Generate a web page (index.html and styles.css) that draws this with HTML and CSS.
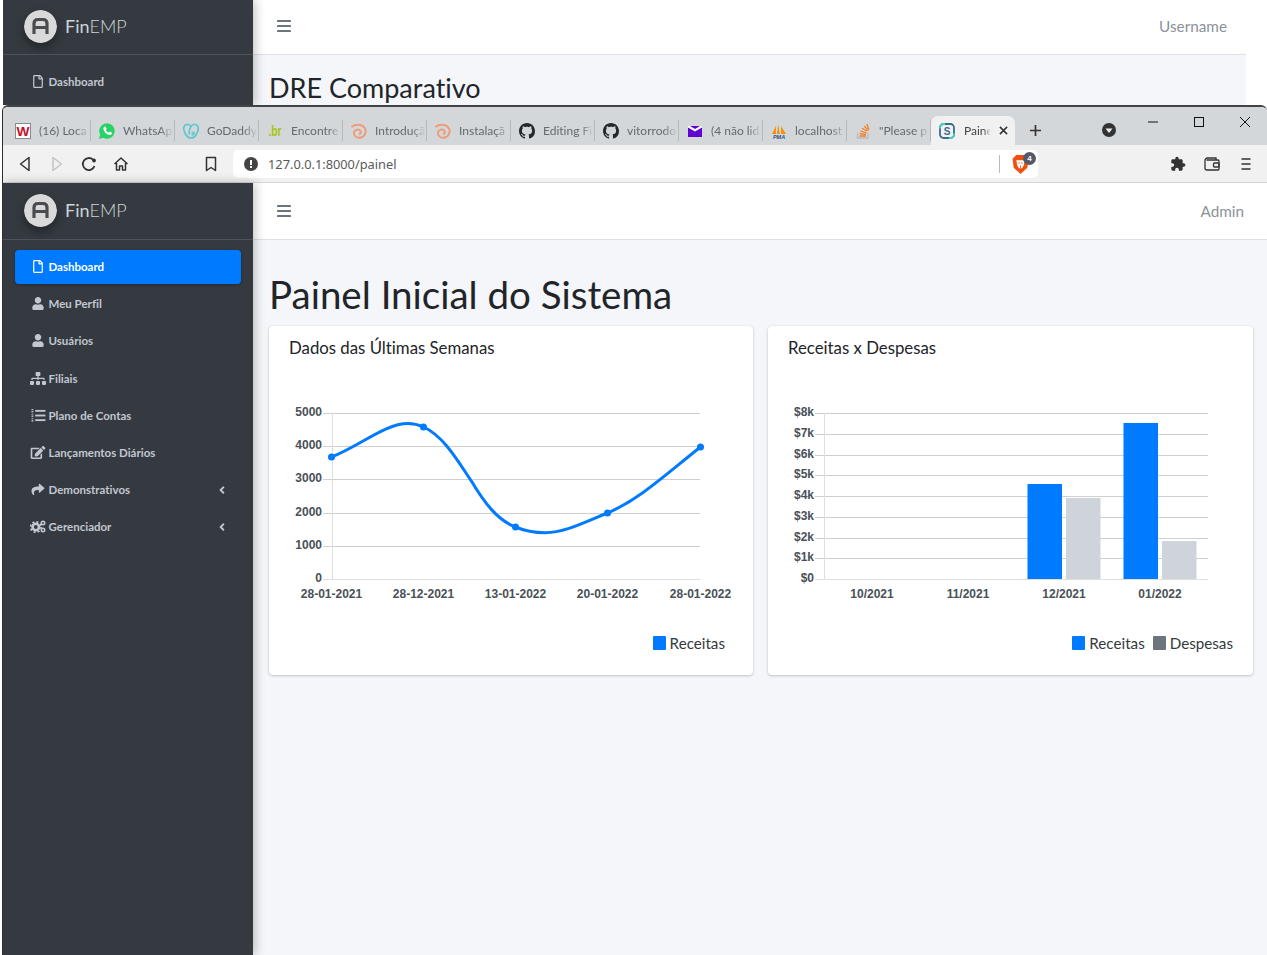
FILE: index.html
```html
<!DOCTYPE html>
<html lang="pt-BR">
<head>
    <meta charset="UTF-8">
    <title>Painel Inicial do Sistema - FinEMP</title>
    <link rel="stylesheet" href="styles.css">
</head>
<body>
    <!-- shared icons -->
    <svg class="defs" aria-hidden="true">
        <symbol id="i-file" viewBox="0 0 384 512"><path d="M369.9 97.9L286 14C277 5 264.8-.1 252.1-.1H48C21.5 0 0 21.5 0 48v416c0 26.5 21.5 48 48 48h288c26.5 0 48-21.5 48-48V131.9c0-12.7-5.1-25-14.1-34zM332.1 128H256V51.9l76.1 76.1zM48 464V48h160v104c0 13.3 10.7 24 24 24h104v288H48z"/></symbol>
        <symbol id="i-user" viewBox="0 0 448 512"><path d="M224 256c70.7 0 128-57.3 128-128S294.7 0 224 0 96 57.3 96 128s57.3 128 128 128zm89.6 32h-16.7c-22.2 10.2-46.9 16-72.9 16s-50.6-5.8-72.9-16h-16.7C60.2 288 0 348.2 0 422.4V464c0 26.5 21.5 48 48 48h352c26.5 0 48-21.5 48-48v-41.6c0-74.2-60.2-134.4-134.4-134.4z"/></symbol>
        <symbol id="i-sitemap" viewBox="0 0 640 512"><path d="M128 352H32c-17.67 0-32 14.33-32 32v96c0 17.67 14.33 32 32 32h96c17.67 0 32-14.33 32-32v-96c0-17.67-14.33-32-32-32zm-24-80h192v48h48v-48h192v48h48v-57.59c0-21.17-17.23-38.41-38.41-38.41H344v-64h40c17.67 0 32-14.33 32-32V32c0-17.67-14.33-32-32-32H256c-17.67 0-32 14.33-32 32v96c0 17.67 14.33 32 32 32h40v64H94.41C73.23 224 56 241.23 56 262.41V320h48v-48zm264 80h-96c-17.67 0-32 14.33-32 32v96c0 17.67 14.33 32 32 32h96c17.67 0 32-14.33 32-32v-96c0-17.67-14.33-32-32-32zm240 0h-96c-17.67 0-32 14.33-32 32v96c0 17.67 14.33 32 32 32h96c17.67 0 32-14.33 32-32v-96c0-17.67-14.33-32-32-32z"/></symbol>
        <symbol id="i-edit" viewBox="0 0 576 512"><path d="M402.6 83.2l90.2 90.2c3.8 3.8 3.8 10 0 13.8L274.4 405.6l-92.8 10.3c-12.4 1.4-22.9-9.1-21.5-21.5l10.3-92.8L388.8 83.2c3.8-3.8 10-3.8 13.8 0zm162-22.9l-48.8-48.8c-15.2-15.2-39.9-15.2-55.2 0l-35.4 35.4c-3.8 3.8-3.8 10 0 13.8l90.2 90.2c3.8 3.8 10 3.8 13.8 0l35.4-35.4c15.2-15.3 15.2-40 0-55.2zM384 346.2V448H64V128h229.8c3.2 0 6.2-1.3 8.5-3.5l40-40c7.6-7.6 2.2-20.5-8.5-20.5H48C21.5 64 0 85.5 0 112v352c0 26.5 21.5 48 48 48h352c26.5 0 48-21.5 48-48V306.2c0-10.7-12.9-16-20.5-8.5l-40 40c-2.2 2.3-3.5 5.3-3.5 8.5z"/></symbol>
        <symbol id="i-share" viewBox="0 0 512 512"><path d="M503.691 189.836L327.687 37.851C312.281 24.546 288 35.347 288 56.015v80.053C127.371 137.907 0 170.1 0 322.326c0 61.441 39.581 122.309 83.333 154.132 13.653 9.931 33.111-2.533 28.077-18.631C66.066 312.814 132.917 274.316 288 272.085V360c0 20.7 24.3 31.453 39.687 18.164l176.004-152c11.071-9.562 11.086-26.753 0-36.328z"/></symbol>
        <symbol id="i-list" viewBox="0 0 16 14">
            <rect x="5" y="1" width="11" height="2"/><rect x="5" y="6" width="11" height="2"/><rect x="5" y="11" width="11" height="2"/>
            <rect x="1" y="0" width="2" height="1"/><rect x="1" y="2" width="2" height="1.5"/><rect x="1" y="5" width="2" height="1"/><rect x="1" y="7" width="2" height="1.5"/><rect x="1" y="10" width="2" height="1"/><rect x="1" y="12" width="2" height="1.5"/>
        </symbol>
        <symbol id="i-cogs" viewBox="0 0 16 13">
            <circle cx="5.8" cy="7" r="3.2" fill="none" stroke="currentColor" stroke-width="2.6"/>
            <circle cx="5.8" cy="7" r="5.2" fill="none" stroke="currentColor" stroke-width="1.8" stroke-dasharray="2 2.08"/>
            <circle cx="13" cy="3" r="1.7" fill="none" stroke="currentColor" stroke-width="1.6"/>
            <circle cx="13" cy="10" r="1.7" fill="none" stroke="currentColor" stroke-width="1.6"/>
        </symbol>
        <symbol id="i-angle" viewBox="0 0 256 512"><path d="M31.7 239l136-136c9.4-9.4 24.6-9.4 33.9 0l22.6 22.6c9.4 9.4 9.4 24.6 0 33.9L127.9 256l96.4 96.4c9.4 9.4 9.4 24.6 0 33.9L201.7 413c-9.4 9.4-24.6 9.4-33.9 0l-136-136c-9.5-9.4-9.5-24.6-.1-34z"/></symbol>
        <symbol id="i-bars" viewBox="0 0 14 12"><rect y="0" width="14" height="2" rx=".4"/><rect y="5" width="14" height="2" rx=".4"/><rect y="10" width="14" height="2" rx=".4"/></symbol>
        <symbol id="i-logo" viewBox="0 0 33 33">
            <circle cx="16.5" cy="16.5" r="16.5" fill="#d9d9d9"/>
            <path d="M10 24V13.500C10 10.500 11.500 9.500 14 9.500H19C21.500 9.500 23 10.500 23 13.500V24M10 17.500H23" fill="none" stroke="#4a4c4f" stroke-width="3.200"/>
        </symbol>
        <symbol id="i-github" viewBox="0 0 16 16"><path fill="#24292e" d="M8 0C3.58 0 0 3.58 0 8c0 3.54 2.29 6.53 5.47 7.59.4.07.55-.17.55-.38 0-.19-.01-.82-.01-1.49-2.01.37-2.53-.49-2.69-.94-.09-.23-.48-.94-.82-1.13-.28-.15-.68-.52-.01-.53.63-.01 1.08.58 1.23.82.72 1.21 1.87.87 2.33.66.07-.52.28-.87.51-1.07-1.78-.2-3.64-.89-3.64-3.95 0-.87.31-1.59.82-2.15-.08-.2-.36-1.02.08-2.12 0 0 .67-.21 2.2.82.64-.18 1.32-.27 2-.27.68 0 1.36.09 2 .27 1.53-1.04 2.2-.82 2.2-.82.44 1.1.16 1.92.08 2.12.51.56.82 1.27.82 2.15 0 3.07-1.87 3.75-3.65 3.95.29.25.54.73.54 1.48 0 1.07-.01 1.93-.01 2.2 0 .21.15.46.55.38A8.013 8.013 0 0016 8c0-4.42-3.58-8-8-8z"/></symbol>
        <symbol id="i-spiral" viewBox="0 0 16 16">
            <path d="M.5 4C4.500 .8 11.500 1 14 5.500C15.800 9 13.500 14.500 8.500 14.800C5 15 2.500 12.500 3 9.500C3.500 7 6.500 5.800 8.800 7.200C10.500 8.500 10 11 8 11.200" fill="none" stroke="#ef9c78" stroke-width="2"/>
        </symbol>
    </svg>

    <!-- window behind -->
    <div class="window-back">
        <div class="app">
            <aside class="sidebar">
                <div class="brand brand-back">
                    <svg class="logo"><use href="#i-logo"/></svg>
                    <span class="brand-name"><b>Fin</b>EMP</span>
                </div>
                <nav class="nav">
                    <a class="nav-link">
                        <span class="nav-icon"><svg class="ic-file"><use href="#i-file"/></svg></span>Dashboard
                    </a>
                </nav>
            </aside>
            <div class="main">
                <header class="topbar topbar-back">
                    <svg class="bars"><use href="#i-bars"/></svg>
                    <span class="user user-back">Username</span>
                </header>
                <div class="content">
                    <h2 class="title-back">DRE Comparativo</h2>
                </div>
            </div>
        </div>
    </div>

    <!-- browser window in front -->
    <div class="window-front">
        <div class="tabstrip">
            <div class="tab">
                <svg class="fav" viewBox="0 0 16 16"><rect x=".5" y=".5" width="15" height="15" fill="#fff" stroke="#8a8a8a"/><text x="8" y="12.500" class="fav-w" textLength="13" lengthAdjust="spacingAndGlyphs">W</text></svg>
                <span class="tab-text">(16) Loca</span>
            </div>
            <div class="tab">
                <svg class="fav" viewBox="0 0 16 16"><path fill="#25d366" d="M0 16l1.200-4.200A7.700 7.700 0 1 1 4.200 14.800z"/><path fill="#fff" d="M5.500 3.800c.5-.3 1-.3 1.200.1l.8 1.700c.1.300 0 .6-.2.800l-.5.600c.6 1.200 1.500 2.100 2.800 2.700l.7-.8c.2-.2.500-.3.800-.1l1.500.8c.4.200.4.600.2 1.100-.4 1-1.500 1.500-2.600 1.200-3-.7-5-2.800-5.700-5.400-.3-1.200.1-2.100 1-2.700z"/></svg>
                <span class="tab-text">WhatsAp</span>
            </div>
            <div class="tab">
                <svg class="fav" viewBox="0 0 16 16"><path d="M8 3.500C6.500 1.500 3.500 .8 2 2.200C.2 4 .8 8 2.500 11C4 13.800 6.500 15 8 15C9.500 15 12 13.800 13.500 11C15.200 8 15.800 4 14 2.200C12.500 .8 9.500 1.500 8 3.500C6.500 6 5.500 9 6.500 11.500M8.500 9.500L11 9.500C11 11 10 12 8.500 12" fill="none" stroke="#5cc6d0" stroke-width="1.600"/></svg>
                <span class="tab-text">GoDaddy</span>
            </div>
            <div class="tab">
                <svg class="fav" viewBox="0 0 16 16"><text x="8" y="13" class="fav-br" textLength="13" lengthAdjust="spacingAndGlyphs">.br</text></svg>
                <span class="tab-text">Encontre</span>
            </div>
            <div class="tab">
                <svg class="fav"><use href="#i-spiral"/></svg>
                <span class="tab-text">Introduçã</span>
            </div>
            <div class="tab">
                <svg class="fav"><use href="#i-spiral"/></svg>
                <span class="tab-text">Instalaçã</span>
            </div>
            <div class="tab">
                <svg class="fav"><use href="#i-github"/></svg>
                <span class="tab-text">Editing Fi</span>
            </div>
            <div class="tab">
                <svg class="fav"><use href="#i-github"/></svg>
                <span class="tab-text">vitorrodo</span>
            </div>
            <div class="tab">
                <svg class="fav" viewBox="0 0 16 16"><rect x="1" y="3" width="14" height="11" fill="#6001d2"/><path d="M1 3H15V4.500L8 8.500L1 4.500z" fill="#fff"/><path d="M3 3H13L8 6z" fill="#6001d2"/></svg>
                <span class="tab-text">(4 não lid</span>
            </div>
            <div class="tab">
                <svg class="fav" viewBox="0 0 16 16"><path fill="#f29111" d="M1 11L5 3V11zM6 11L7 1L9 11zM10 11V3L15 11z"/><text x="8" y="15.500" class="fav-pma">PMA</text></svg>
                <span class="tab-text">localhost</span>
            </div>
            <div class="tab">
                <svg class="fav" viewBox="0 0 16 16"><path d="M2.500 10V15H13V10" fill="none" stroke="#bcbbbb" stroke-width="1.300"/><path d="M4.500 13H11M4.700 10.500L11 11.600M5.400 8L11.300 9.800M7 5.300L12.200 8.300M9.300 3L13.200 7.400M11.800 1L13.800 6.400" fill="none" stroke="#f48024" stroke-width="1.300"/></svg>
                <span class="tab-text">"Please p</span>
            </div>
            <div class="tab tab-active">
                <svg class="fav" viewBox="0 0 16 16"><rect x="1" y="1" width="14" height="14" rx="3.500" fill="none" stroke="#3f6b8c" stroke-width="1.800"/><path d="M1 5.500V4.500A3.500 3.500 0 0 1 4.500 1H6M15 10.500V11.500A3.500 3.500 0 0 1 11.500 15H10" fill="none" stroke="#45d1bd" stroke-width="1.800"/><text x="8" y="11.800" class="fav-s">S</text></svg>
                <span class="tab-text tab-text-active">Paine</span>
                <svg class="tab-close" viewBox="0 0 10 10"><path d="M1 1L9 9M9 1L1 9" stroke="#333" stroke-width="1.700"/></svg>
            </div>
            <svg class="tab-new" viewBox="0 0 14 14"><path d="M7 1V13M1 7H13" stroke="#333" stroke-width="1.800"/></svg>
            <svg class="tab-list" viewBox="0 0 14 14"><circle cx="7" cy="7" r="7" fill="#333"/><path d="M3.500 5.500H10.500L7 10z" fill="#f1f1f1"/></svg>
            <div class="win-controls">
                <span class="win-btn"><svg viewBox="0 0 10 10"><path d="M0 5H10" stroke="#111"/></svg></span>
                <span class="win-btn"><svg viewBox="0 0 10 10"><rect x=".5" y=".5" width="9" height="9" fill="none" stroke="#111"/></svg></span>
                <span class="win-btn"><svg viewBox="0 0 10 10"><path d="M0 0L10 10M10 0L0 10" stroke="#111"/></svg></span>
            </div>
        </div>

        <div class="toolbar">
            <span class="tool"><svg viewBox="0 0 16 16"><path d="M12 1.500V14.500L3.500 8z" fill="none" stroke="#333" stroke-width="1.500" stroke-linejoin="round"/></svg></span>
            <span class="tool"><svg viewBox="0 0 16 16"><path d="M4 1.500V14.500L12.500 8z" fill="none" stroke="#c4c4c4" stroke-width="1.500" stroke-linejoin="round"/></svg></span>
            <span class="tool"><svg viewBox="0 0 16 16"><path d="M13.500 10A6 6 0 1 1 12 3.700" fill="none" stroke="#333" stroke-width="1.800"/><circle cx="13" cy="4.500" r="1.900" fill="#333"/></svg></span>
            <span class="tool"><svg viewBox="0 0 16 16"><path d="M1.500 8L8 2L14.500 8M3.500 7V14H6.500V10H9.500V14H12.500V7" fill="none" stroke="#333" stroke-width="1.500" stroke-linejoin="round"/></svg></span>
            <span class="tool tool-bookmark"><svg viewBox="0 0 16 16"><path d="M3.500 1.500H12.500V14.500L8 11.500L3.500 14.500z" fill="none" stroke="#333" stroke-width="1.500" stroke-linejoin="round"/></svg></span>
            <div class="urlbar">
                <svg class="url-alert" viewBox="0 0 14 14"><circle cx="7" cy="7" r="7" fill="#444"/><rect x="6" y="3" width="2" height="5" fill="#fff"/><rect x="6" y="9" width="2" height="2" fill="#fff"/></svg>
                <span class="url-text">127.0.0.1:8000/painel</span>
                <span class="url-sep"></span>
                <span class="shield">
                    <svg viewBox="0 0 16 18"><path fill="#f1500f" d="M4 0H12L15.500 3.500L14.500 12L8 18L1.500 12L.5 3.500z"/><path fill="#fff" d="M4 5H12L11 10L9.500 12.500H6.500L5 10z"/><path fill="#f1500f" d="M6 7H7.300V8H6zM8.700 7H10V8H8.700zM7.500 10H8.500V12H7.500z"/></svg>
                    <span class="shield-count">4</span>
                </span>
            </div>
            <span class="tool tool-puzzle"><svg viewBox="0 0 24 24"><path fill="#333" d="M20.500 11H19V7c0-1.100-.9-2-2-2h-4V3.500C13 2.120 11.880 1 10.500 1S8 2.120 8 3.500V5H4c-1.100 0-1.990.9-1.990 2v3.800H3.500c1.490 0 2.700 1.210 2.700 2.700s-1.210 2.700-2.700 2.700H2V20c0 1.100.9 2 2 2h3.800v-1.500c0-1.490 1.210-2.700 2.700-2.700 1.490 0 2.700 1.210 2.700 2.700V22H17c1.100 0 2-.9 2-2v-4h1.500c1.380 0 2.500-1.120 2.500-2.500S21.880 11 20.500 11z"/></svg></span>
            <span class="tool tool-side"><svg viewBox="0 0 16 14"><path d="M1 3.500C1 2 2 1 3.500 1H12V3M1 3.500V11C1 12.200 2 13 3 13H14C14.600 13 15 12.600 15 12V4C15 3.400 14.600 3 14 3H2.500" fill="none" stroke="#333" stroke-width="1.300"/><rect x="9.500" y="6" width="5.500" height="4" rx="1" fill="none" stroke="#333" stroke-width="1.300"/></svg></span>
            <span class="tool tool-side"><svg viewBox="0 0 16 16"><path d="M3.500 3H12.500M3.500 8H12.500M3.500 13H12.500" stroke="#333" stroke-width="1.600"/></svg></span>
        </div>

        <div class="app">
            <aside class="sidebar">
                <div class="brand">
                    <svg class="logo"><use href="#i-logo"/></svg>
                    <span class="brand-name"><b>Fin</b>EMP</span>
                </div>
                <nav class="nav">
                    <a class="nav-link active"><span class="nav-icon"><svg class="ic-file"><use href="#i-file"/></svg></span>Dashboard</a>
                    <a class="nav-link"><span class="nav-icon"><svg class="ic-user"><use href="#i-user"/></svg></span>Meu Perfil</a>
                    <a class="nav-link"><span class="nav-icon"><svg class="ic-user"><use href="#i-user"/></svg></span>Usuários</a>
                    <a class="nav-link"><span class="nav-icon"><svg class="ic-wide"><use href="#i-sitemap"/></svg></span>Filiais</a>
                    <a class="nav-link"><span class="nav-icon"><svg class="ic-wide"><use href="#i-list"/></svg></span>Plano de Contas</a>
                    <a class="nav-link"><span class="nav-icon"><svg class="ic-wide"><use href="#i-edit"/></svg></span>Lançamentos Diários</a>
                    <a class="nav-link"><span class="nav-icon"><svg class="ic-wide"><use href="#i-share"/></svg></span>Demonstrativos<svg class="angle"><use href="#i-angle"/></svg></a>
                    <a class="nav-link"><span class="nav-icon"><svg class="ic-wide"><use href="#i-cogs"/></svg></span>Gerenciador<svg class="angle"><use href="#i-angle"/></svg></a>
                </nav>
            </aside>
            <div class="main">
                <header class="topbar">
                    <svg class="bars"><use href="#i-bars"/></svg>
                    <span class="user">Admin</span>
                </header>
                <div class="content">
                    <h1 class="title">Painel Inicial do Sistema</h1>
                    <div class="cards">
                        <section class="card">
                            <h3 class="card-title">Dados das Últimas Semanas</h3>
                            <svg class="chart" viewBox="0 0 484 240">
                                <g class="grid">
                                    <path d="M54 23.500H431M54 56.500H431M54 89.500H431M54 123.500H431M54 156.500H431"/>
                                </g>
                                <path class="axis" d="M63.500 23V189.500M54 189.500H431"/>
                                <g class="tick tick-y">
                                    <text x="53" y="26">5000</text>
                                    <text x="53" y="59">4000</text>
                                    <text x="53" y="92">3000</text>
                                    <text x="53" y="126">2000</text>
                                    <text x="53" y="159">1000</text>
                                    <text x="53" y="192">0</text>
                                </g>
                                <g class="tick tick-x">
                                    <text x="62.500" y="208">28-01-2021</text>
                                    <text x="154.500" y="208">28-12-2021</text>
                                    <text x="246.500" y="208">13-01-2022</text>
                                    <text x="338.500" y="208">20-01-2022</text>
                                    <text x="431.500" y="208">28-01-2022</text>
                                </g>
                                <path class="line" d="M62.500 67C91 56 116 33.500 139 33.500C144 33.500 150 35 154.500 37C175 46 190 73 203 92C215 112 228 130 246.500 137C256 141 266 142.700 276 142.700C296 142.700 316 132 338.500 123C371 109 396 85 431.500 57"/>
                                <g class="dots">
                                    <circle cx="62.500" cy="67" r="3.500"/>
                                    <circle cx="154.500" cy="37" r="3.500"/>
                                    <circle cx="246.500" cy="137" r="3.500"/>
                                    <circle cx="338.500" cy="123" r="3.500"/>
                                    <circle cx="431.500" cy="57" r="3.500"/>
                                </g>
                            </svg>
                            <div class="legend legend-one">
                                <span class="legend-item"><i class="swatch swatch-blue"></i>Receitas</span>
                            </div>
                        </section>
                        <section class="card">
                            <h3 class="card-title">Receitas x Despesas</h3>
                            <svg class="chart" viewBox="0 0 484 240">
                                <g class="grid">
                                    <path d="M47 23.500H440M47 44.500H440M47 65.500H440M47 85.500H440M47 106.500H440M47 127.500H440M47 148.500H440M47 168.500H440"/>
                                </g>
                                <path class="axis" d="M56.500 23V189.500M47 189.500H440"/>
                                <g class="tick tick-y">
                                    <text x="46" y="26">$8k</text>
                                    <text x="46" y="47">$7k</text>
                                    <text x="46" y="68">$6k</text>
                                    <text x="46" y="88">$5k</text>
                                    <text x="46" y="109">$4k</text>
                                    <text x="46" y="130">$3k</text>
                                    <text x="46" y="151">$2k</text>
                                    <text x="46" y="171">$1k</text>
                                    <text x="46" y="192">$0</text>
                                </g>
                                <g class="tick tick-x">
                                    <text x="104" y="208">10/2021</text>
                                    <text x="200" y="208">11/2021</text>
                                    <text x="296" y="208">12/2021</text>
                                    <text x="392" y="208">01/2022</text>
                                </g>
                                <rect class="bar-blue" x="259.500" y="94" width="34.500" height="95"/>
                                <rect class="bar-gray" x="298" y="108" width="34.500" height="81"/>
                                <rect class="bar-blue" x="355.500" y="33" width="34.500" height="156"/>
                                <rect class="bar-gray" x="394" y="151" width="34.500" height="38"/>
                            </svg>
                            <div class="legend">
                                <span class="legend-item"><i class="swatch swatch-blue"></i>Receitas</span>
                                <span class="legend-item"><i class="swatch swatch-gray"></i>Despesas</span>
                            </div>
                        </section>
                    </div>
                </div>
            </div>
        </div>
    </div>
</body>
</html>
```

FILE: styles.css
```css
* {
    margin: 0;
    padding: 0;
    box-sizing: border-box;
}

html, body {
    height: 100%;
    overflow: hidden;
}

body {
    background-color: #fff;
    color: #212529;
    font-family: 'Lato', 'Noto Sans', sans-serif;
    font-variant-ligatures: none;
}

.defs {
    display: none;
}

/* the two windows sit on a free desktop */
.window-back {
    position: absolute;
    left: 3px;
    top: 0;
    width: 1243px;
    height: 105px;
    overflow: hidden;
}

.window-front {
    position: absolute;
    left: 2px;
    top: 105px;
    right: 0;
    bottom: 0;
    display: flex;
    flex-direction: column;
    border-top: 2px solid #414345;
    border-left: 1px solid #2e2e2e;
    border-top-left-radius: 6px;
    border-top-right-radius: 6px;
    overflow: hidden;
}

/* browser tabs */
.tabstrip {
    display: flex;
    align-items: flex-end;
    flex-shrink: 0;
    height: 38px;
    padding-left: 4px;
    background-color: #d4d7da;
}

.tab {
    display: flex;
    align-items: center;
    gap: 8px;
    width: 84px;
    height: 21px;
    margin-bottom: 4px;
    padding: 0 0 0 8px;
    border-right: 1px solid #b6b9bc;
    font-size: 12px;
    color: #65696f;
}

.tab-active {
    height: 29px;
    margin-bottom: 0;
    padding-right: 7px;
    border-right: 0;
    border-radius: 7px 7px 0 0;
    background-color: #f1f1f1;
    color: #444;
}

.fav {
    flex-shrink: 0;
    width: 16px;
    height: 16px;
}

.fav-w {
    font: bold 13px 'Liberation Sans', sans-serif;
    fill: #c8102e;
    text-anchor: middle;
}

.fav-br {
    font: bold 14px 'Liberation Sans', sans-serif;
    fill: #a6c40a;
    text-anchor: middle;
}

.fav-pma {
    font: italic bold 5.500px 'Liberation Sans', sans-serif;
    fill: #33508a;
    text-anchor: middle;
}

.fav-s {
    font: bold 10px 'Liberation Sans', sans-serif;
    fill: #3f6b8c;
    text-anchor: middle;
}

.tab-text {
    flex: 1;
    min-width: 0;
    white-space: nowrap;
    -webkit-mask-image: linear-gradient(to right, #000 72%, transparent 100%);
    mask-image: linear-gradient(to right, #000 72%, transparent 100%);
}

.tab-text-active {
    margin-left: 1px;
}

.tab-close {
    flex-shrink: 0;
    width: 9px;
    height: 9px;
}

.tab-new {
    width: 13px;
    height: 13px;
    margin: 0 0 8px 14px;
    flex-shrink: 0;
}

.tab-list {
    width: 14px;
    height: 14px;
    margin: 0 0 8px 60px;
    flex-shrink: 0;
}

.win-controls {
    display: flex;
    align-self: flex-start;
    margin-left: auto;
    margin-right: -1px;
}

.win-btn {
    display: flex;
    align-items: center;
    justify-content: center;
    width: 46px;
    height: 30px;
}

.win-btn svg {
    width: 10px;
    height: 10px;
}

/* browser toolbar */
.toolbar {
    display: flex;
    align-items: center;
    flex-shrink: 0;
    height: 38px;
    padding: 1px 0 0 6px;
    border-bottom: 1px solid #d6d6d6;
    background-color: #f1f1f1;
}

.tool {
    display: flex;
    align-items: center;
    justify-content: center;
    flex-shrink: 0;
    width: 32px;
    height: 28px;
}

.tool svg {
    width: 16px;
    height: 16px;
}

.tool-bookmark {
    margin-left: 58px;
}

.tool-puzzle {
    margin-left: 124px;
}

.tool-side {
    margin-left: 2px;
}

.urlbar {
    display: flex;
    align-items: center;
    flex-shrink: 0;
    width: 805px;
    height: 28px;
    margin-left: 6px;
    padding: 0 9px 0 11px;
    border-radius: 5px;
    background-color: #fff;
}

.url-alert {
    width: 14px;
    height: 14px;
    flex-shrink: 0;
}

.url-text {
    flex: 1;
    margin-left: 10px;
    font-family: 'Noto Sans', sans-serif;
    font-size: 12.800px;
    color: #5a5a5a;
}

.url-sep {
    width: 1px;
    height: 18px;
    background-color: #b9b9b9;
}

.shield {
    position: relative;
    width: 17px;
    height: 19px;
    margin-left: 12px;
}

.shield svg {
    display: block;
    width: 17px;
    height: 19px;
}

.shield-count {
    position: absolute;
    left: 11px;
    top: -3px;
    width: 13px;
    height: 13px;
    border-radius: 50%;
    background-color: #555a6b;
    color: #fff;
    font: bold 8px/13px 'Liberation Sans', sans-serif;
    text-align: center;
}

/* application shell */
.app {
    display: flex;
    flex: 1;
    min-height: 0;
    height: 100%;
}

.sidebar {
    position: relative;
    z-index: 1;
    flex-shrink: 0;
    width: 250px;
    background-color: #343a40;
    box-shadow: 2px 0 10px rgba(0, 0, 0, .25);
}

.brand {
    display: flex;
    align-items: center;
    height: 57px;
    padding: 0 0 2px 21px;
    border-bottom: 1px solid #4b545c;
}

.brand-back {
    height: 55px;
}

.logo {
    width: 33px;
    height: 33px;
    border-radius: 50%;
    box-shadow: 0 5px 10px rgba(0, 0, 0, .35);
}

.brand-name {
    margin-left: 8px;
    font-size: 18px;
    font-weight: 300;
    color: #d0d4d9;
}

.brand-name b {
    font-weight: 400;
}

.nav {
    padding: 10px 12px 0;
}

.nav-link {
    display: flex;
    align-items: center;
    height: 34px;
    margin-bottom: 3.200px;
    padding: 0 0 1px 13px;
    border-radius: 4px;
    font-size: 11.500px;
    font-weight: 700;
    color: #c2c7d0;
}

.nav-link.active {
    background-color: #007bff;
    color: #fff;
    box-shadow: 0 1px 3px rgba(0, 0, 0, .3);
}

.nav-icon {
    display: flex;
    align-items: center;
    justify-content: center;
    flex-shrink: 0;
    width: 20px;
    margin-right: .5px;
}

.nav-icon svg {
    fill: currentColor;
    color: inherit;
}

.ic-file {
    width: 10px;
    height: 13px;
}

.ic-user {
    width: 12px;
    height: 13px;
}

.ic-wide {
    width: 16px;
    height: 13px;
}

.angle {
    width: 6px;
    height: 12px;
    margin-left: auto;
    margin-right: 16px;
    fill: currentColor;
}

.main {
    display: flex;
    flex: 1;
    flex-direction: column;
    min-width: 0;
    background-color: #f4f6f9;
}

.topbar {
    display: flex;
    align-items: center;
    justify-content: space-between;
    flex-shrink: 0;
    height: 57px;
    padding: 0 23px 1px 24px;
    border-bottom: 1px solid #dee2e6;
    background-color: #fff;
}

.topbar-back {
    height: 55px;
    padding: 0 19px 2px 24px;
}

.bars {
    width: 14px;
    height: 12px;
    fill: #6c757d;
}

.user {
    font-size: 15.300px;
    color: #8b9299;
}

.content {
    flex: 1;
    padding: 0 14px 0 16px;
}

.title {
    padding-top: 34px;
    margin-bottom: 12px;
    font-size: 38.500px;
    font-weight: 400;
    line-height: 40px;
}

.title-back {
    padding-top: 16px;
    font-size: 27px;
    font-weight: 400;
    line-height: 34px;
}

/* chart cards */
.cards {
    display: grid;
    grid-template-columns: 484px 485px;
    gap: 15px;
}

.card {
    height: 349px;
    border-radius: 4px;
    background-color: #fff;
    box-shadow: 0 0 1px rgba(0, 0, 0, .13), 0 1px 3px rgba(0, 0, 0, .2);
}

.card-title {
    height: 64px;
    padding: 12px 20px 0;
    font-size: 16.800px;
    font-weight: 400;
    line-height: 20px;
}

.chart {
    display: block;
    width: 484px;
    height: 240px;
}

.grid path {
    fill: none;
    stroke: #cfcfcf;
}

.axis {
    fill: none;
    stroke: #dfdfdf;
}

.tick text {
    font: bold 12px 'Liberation Sans', sans-serif;
    fill: #495057;
}

.tick-y text {
    text-anchor: end;
}

.tick-x text {
    text-anchor: middle;
}

.line {
    fill: none;
    stroke: #007bff;
    stroke-width: 3;
}

.dots circle {
    fill: #007bff;
}

.bar-blue {
    fill: #007bff;
}

.bar-gray {
    fill: #ced4da;
}

.legend {
    display: flex;
    justify-content: flex-end;
    gap: 8px;
    height: 26px;
    padding-right: 20px;
}

.legend-one {
    padding-right: 28px;
}

.legend-item {
    display: flex;
    align-items: center;
    gap: 4px;
    font-size: 15.200px;
    color: #343a40;
}

.swatch {
    display: block;
    width: 13px;
    height: 14px;
    border-radius: 1px;
}

.swatch-blue {
    background-color: #007bff;
}

.swatch-gray {
    background-color: #6c757d;
}
```
